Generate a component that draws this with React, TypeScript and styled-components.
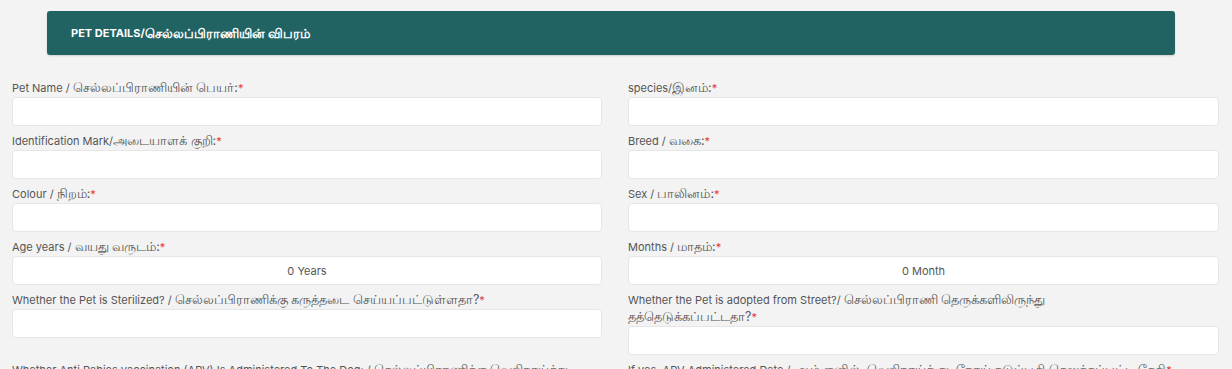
import React from "react";
import styled, { createGlobalStyle } from "styled-components";

const GlobalStyle = createGlobalStyle`
  html, body {
    margin: 0;
    padding: 0;
    background: #f3f3f3;
    font-family: Inter, "Noto Sans", "Liberation Sans", sans-serif;
  }
`;

const Page = styled.div`
  padding: 11px 13px 0 12px;
  height: 369px;
  overflow: hidden;
  box-sizing: border-box;
`;

const SectionHeader = styled.div`
  margin: 0 44px 25px 35px;
  height: 44px;
  display: flex;
  align-items: center;
  padding-left: 24px;
  background: #216362;
  border-radius: 3px;
  box-shadow: 0 1px 2px rgba(0, 0, 0, 0.15);
  color: #ffffff;
  font-size: 11px;
  font-weight: 700;
`;

const Tamil = styled.span<{ $size?: number }>`
  font-size: ${(p) => p.$size ?? 12.5}px;
  line-height: 12px;
`;

const Grid = styled.div`
  display: grid;
  grid-template-columns: 590px 591px;
  column-gap: 26px;
  align-items: start;
`;

const Field = styled.div`
  display: flex;
  flex-direction: column;
  margin-bottom: 7px;
`;

const Label = styled.label<{ $maxW?: number }>`
  font-size: 11px;
  line-height: 17px;
  height: auto;
  color: #555555;
  max-width: ${(p) => (p.$maxW ? `${p.$maxW}px` : "none")};
`;

const Star = styled.span`
  color: #e03b3b;
`;

const Input = styled.input<{ $center?: boolean }>`
  height: 29px;
  box-sizing: border-box;
  border: 1px solid #e6e6e6;
  border-radius: 4px;
  background: #ffffff;
  font-family: inherit;
  font-size: 11px;
  color: #555555;
  text-align: ${(p) => (p.$center ? "center" : "left")};
  padding: 0 10px;
  outline: none;
`;

type Item = { en: string; ta: string; value?: string; maxW?: number };

const rows: [Item, Item][] = [
  [
    { en: "Pet Name / ", ta: "செல்லப்பிராணியின் பெயர்:" },
    { en: "species/", ta: "இனம்:" },
  ],
  [
    { en: "Identification Mark/", ta: "அடையாளக் குறி:" },
    { en: "Breed / ", ta: "வகை:" },
  ],
  [
    { en: "Colour / ", ta: "நிறம்:" },
    { en: "Sex / ", ta: "பாலினம்:" },
  ],
  [
    { en: "Age years / ", ta: "வயது வருடம்:", value: "0 Years" },
    { en: "Months / ", ta: "மாதம்:", value: "0 Month" },
  ],
  [
    {
      en: "Whether the Pet is Sterilized? / ",
      ta: "செல்லப்பிராணிக்கு கருத்தடை செய்யப்பட்டுள்ளதா?",
    },
    {
      en: "Whether the Pet is adopted from Street?/ ",
      ta: "செல்லப்பிராணி தெருக்களிலிருந்து தத்தெடுக்கப்பட்டதா?",
      maxW: 420,
    },
  ],
  [
    {
      en: "Whether Anti Rabies vaccination (ARV) Is Administered To The Dog: / ",
      ta: "செல்லப்பிராணிக்கு வெறிநாய்க்கடி தடுப்பூசி செலுத்தப்பட்டுள்ளதா?",
    },
    {
      en: "If yes, ARV Administered Date / ",
      ta: "ஆம் எனில், வெறிநாய்க் கடிநோய் தடுப்பூசி செலுத்தப்பட்ட தேதி",
    },
  ],
];

function FormField({ item }: { item: Item }) {
  return (
    <Field>
      <Label $maxW={item.maxW}>
        {item.en}
        <Tamil>{item.ta}</Tamil>
        <Star>*</Star>
      </Label>
      <Input readOnly $center={!!item.value} value={item.value ?? ""} />
    </Field>
  );
}

export default function App() {
  return (
    <>
      <GlobalStyle />
      <Page>
        <SectionHeader>
          PET DETAILS/<Tamil $size={13}>செல்லப்பிராணியின் விபரம்</Tamil>
        </SectionHeader>
        <Grid>
          {rows.map((row, i) => (
            <React.Fragment key={i}>
              <FormField item={row[0]} />
              <FormField item={row[1]} />
            </React.Fragment>
          ))}
        </Grid>
      </Page>
    </>
  );
}
